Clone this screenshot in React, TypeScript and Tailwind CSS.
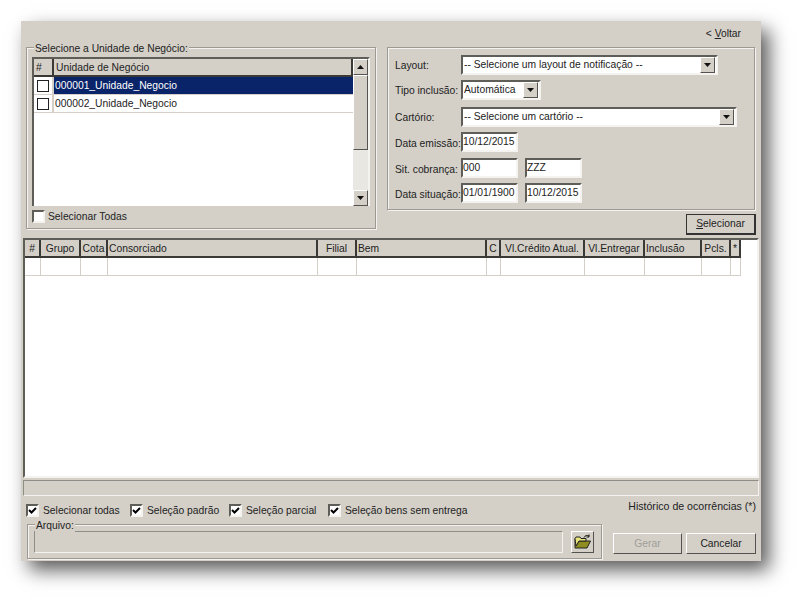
import React from "react";

const sunken = "border-2 border-t-[#5f5d58] border-l-[#5f5d58] border-r-[#f4f3ef] border-b-[#f4f3ef]";
const raised = "border border-t-white border-l-white border-r-[#55534f] border-b-[#55534f]";
const etched = "border border-[#9c9a93] shadow-[1px_1px_0_#f4f3ef,inset_1px_1px_0_#f4f3ef]";

const gridCols = [
  { label: "#", w: "w-[16px]", align: "text-center" },
  { label: "Grupo", w: "w-[40px]", align: "text-center" },
  { label: "Cota", w: "w-[27px]", align: "text-center" },
  { label: "Consorciado", w: "w-[210px]", align: "text-left" },
  { label: "Filial", w: "w-[39px]", align: "text-center" },
  { label: "Bem", w: "w-[130px]", align: "text-left" },
  { label: "C", w: "w-[14px]", align: "text-center" },
  { label: "Vl.Crédito Atual.", w: "w-[84px]", align: "text-center" },
  { label: "Vl.Entregar", w: "w-[60px]", align: "text-center" },
  { label: "Inclusão", w: "w-[57px]", align: "text-left" },
  { label: "Pcls.", w: "w-[29px]", align: "text-center" },
  { label: "*", w: "w-[10px]", align: "text-center" },
];

const Arrow = ({ up = false }: { up?: boolean }) => (
  <svg width="7" height="4" viewBox="0 0 7 4" className={up ? "rotate-180" : ""}>
    <path d="M0 0h7L3.5 4z" fill="#111" />
  </svg>
);

const ScrollBtn = ({ up = false }: { up?: boolean }) => (
  <div className={`flex h-[16px] w-[15px] shrink-0 items-center justify-center bg-[#d4d0c8] ${raised}`}>
    <Arrow up={up} />
  </div>
);

const Combo = ({ text, w }: { text: string; w: string }) => (
  <div className={`flex h-[20px] items-center bg-white pl-[1px] pr-[1px] ${w} ${sunken}`}>
    <span className="flex-1 truncate pt-[1px]">{text}</span>
    <ScrollBtn />
  </div>
);

const Field = ({ text }: { text: string }) => (
  <div className={`flex h-[20px] w-[57px] items-center bg-white ${sunken}`}>{text}</div>
);

const FormRow = ({ label, children, mt, low }: { label: string; children: React.ReactNode; mt: string; low?: boolean }) => (
  <div className={`flex items-center ${mt}`}>
    <span className={`w-[66px] shrink-0 whitespace-nowrap ${low ? "pt-[4px]" : "pt-[2px]"}`}>{label}</span>
    {children}
  </div>
);

const Check = ({ label, w }: { label: string; w: string }) => (
  <div className={`flex items-center ${w}`}>
    <div className={`flex h-[13px] w-[13px] shrink-0 items-center justify-center bg-white ${sunken}`}>
      <svg width="9" height="9" viewBox="0 0 9 9">
        <path d="M1 4l2.5 2.5L8 2" fill="none" stroke="#000" strokeWidth="2" />
      </svg>
    </div>
    <span className="ml-[4px] whitespace-nowrap pt-[2px]">{label}</span>
  </div>
);

const UnitRow = ({ text, selected }: { text: string; selected?: boolean }) => (
  <div className="flex h-[18px] border-b border-[#d4d0c8]">
    <div className="flex w-[20px] items-center justify-center border-r-2 border-[#d4d0c8] bg-white">
      <div className="h-[12px] w-[12px] border border-[#222] bg-white" />
    </div>
    <div className={`flex flex-1 items-center pl-[1px] pt-[2px] ${selected ? "bg-[#0a246a] text-white" : "bg-white"}`}>{text}</div>
  </div>
);

const GroupLabel = ({ text, left }: { text: string; left: string }) => (
  <span className={`absolute top-[-6px] bg-[#d4d0c8] px-[1px] leading-[13px] ${left}`}>{text}</span>
);

const FolderIcon = () => (
  <svg width="18" height="16" viewBox="0 0 18 16">
    <path d="M1 4.5V14h12l3.5-7H5L2 12" fill="#8f8c22" stroke="#222" strokeWidth="1" />
    <path d="M1 4.5 2 3h4l1 1.5h5V7H5l-3 5z" fill="#e8e47c" stroke="#222" strokeWidth="1" />
    <path d="M10 3.5C11 1.5 13 1 15 2M15 .5V3h-2.5" fill="none" stroke="#111" strokeWidth="1" />
  </svg>
);

export default function App() {
  return (
    <div className="min-h-screen bg-white pl-[21px] pt-[21px] font-['Liberation_Sans',Arial,sans-serif] text-[10.3px] leading-none text-[#222]">
      <div className="flex h-[540px] w-[740px] flex-col bg-[#d4d0c8] shadow-[8px_9px_18px_rgba(0,0,0,0.65)]">
        {/* topo */}
        <div className="flex h-[26px] shrink-0 items-center justify-end pr-[20px] pt-[1px]">
          <span>
            &lt; <span className="underline">V</span>oltar
          </span>
        </div>

        {/* filtros */}
        <div className="flex h-[191px] shrink-0 pl-[5px]">
          <div className={`relative h-[182px] w-[350px] shrink-0 px-[5px] pt-[9px] ${etched}`}>
            <GroupLabel text="Selecione a Unidade de Negócio:" left="left-[7px]" />
            <div className={`flex h-[149px] bg-white ${sunken} border-b-0`}>
              <div className="flex-1">
                <div className="flex h-[18px] border-b-2 border-[#3a3936] bg-[#d4d0c8]">
                  <div className="flex w-[20px] items-center border-r-2 border-[#3a3936] pl-[2px] pt-[2px]">#</div>
                  <div className="flex flex-1 items-center border-r-2 border-[#3a3936] pl-[2px] pt-[2px]">Unidade de Negócio</div>
                </div>
                <UnitRow text="000001_Unidade_Negocio" selected />
                <UnitRow text="000002_Unidade_Negocio" />
              </div>
              <div className="flex w-[15px] shrink-0 flex-col bg-[#e9e7e1]">
                <ScrollBtn up />
                <div className={`h-[75px] bg-[#d4d0c8] ${raised}`} />
                <div className="flex-1" />
                <ScrollBtn />
              </div>
            </div>
            <div className="mt-[4px] flex items-center">
              <div className={`h-[13px] w-[13px] bg-white ${sunken}`} />
              <span className="ml-[3px] pt-[2px]">Selecionar Todas</span>
            </div>
          </div>

          <div className="ml-[11px] w-[369px] shrink-0">
            <div className={`h-[163px] w-[368px] pl-[7px] pt-[7px] ${etched}`}>
              <FormRow label="Layout:" mt="mt-0">
                <Combo text="-- Selecione um layout de notificação --" w="w-[257px]" />
              </FormRow>
              <FormRow label="Tipo inclusão:" mt="mt-[5px]">
                <Combo text="Automática" w="w-[80px]" />
              </FormRow>
              <FormRow label="Cartório:" mt="mt-[7px]">
                <Combo text="-- Selecione um cartório --" w="w-[276px]" />
              </FormRow>
              <FormRow label="Data emissão:" mt="mt-[5px]" low>
                <Field text="10/12/2015" />
              </FormRow>
              <FormRow label="Sit. cobrança:" mt="mt-[6px]" low>
                <div className="flex gap-[7px]">
                  <Field text="000" />
                  <Field text="ZZZ" />
                </div>
              </FormRow>
              <FormRow label="Data situação:" mt="mt-[5px]" low>
                <div className="flex gap-[7px]">
                  <Field text="01/01/1900" />
                  <Field text="10/12/2015" />
                </div>
              </FormRow>
            </div>
            <div className="mt-[4px] flex justify-end">
              <div className="flex h-[21px] w-[70px] items-center justify-center border border-b-2 border-r-2 border-[#333] bg-[#d4d0c8] pt-[1px]">
                <span>
                  <span className="underline">S</span>elecionar
                </span>
              </div>
            </div>
          </div>
        </div>

        {/* grade */}
        <div className={`mx-[2px] h-[240px] shrink-0 bg-white ${sunken}`}>
          <div className="flex h-[18px] w-fit border-b-2 border-[#3a3936] bg-[#d4d0c8]">
            {gridCols.map((c) => (
              <div key={c.label} className={`flex items-center justify-center whitespace-nowrap border-r-2 border-[#3a3936] pt-[2px] ${c.w} ${c.align}`}>
                <span className={c.align === "text-left" ? "w-full pl-[1px]" : ""}>{c.label}</span>
              </div>
            ))}
          </div>
          <div className="flex h-[18px] w-fit border-b border-[#d4d0c8]">
            {gridCols.map((c) => (
              <div key={c.label} className={`border-r border-[#d4d0c8] ${c.w}`} />
            ))}
          </div>
        </div>
        <div className="mx-[2px] mt-[2px] h-[16px] shrink-0 border border-t-[#8f8d87] border-l-[#8f8d87] border-r-[#f4f3ef] border-b-[#f4f3ef]" />

        {/* rodape */}
        <div className="flex flex-1 items-start justify-between pl-[5px] pr-[5px]">
          <div className="flex w-[576px] flex-col">
            <div className="mt-[7px] flex h-[15px] items-center">
              <Check label="Selecionar todas" w="w-[104px]" />
              <Check label="Seleção padrão" w="w-[99px]" />
              <Check label="Seleção parcial" w="w-[99px]" />
              <Check label="Seleção bens sem entrega" w="w-[150px]" />
            </div>
            <div className={`relative ml-[1px] mt-[6px] flex h-[35px] w-[575px] items-center gap-[8px] pl-[6px] ${etched}`}>
              <GroupLabel text="Arquivo:" left="left-[7px]" />
              <div className="mt-[1px] h-[22px] w-[529px] border border-t-[#8f8d87] border-l-[#8f8d87] border-r-[#f4f3ef] border-b-[#f4f3ef] bg-[#d4d0c8]" />
              <div className={`mt-[1px] flex h-[22px] w-[23px] items-center justify-center bg-[#d4d0c8] ${raised}`}>
                <FolderIcon />
              </div>
            </div>
          </div>
          <div className="flex flex-col items-end">
            <span className="mt-[5px] h-[27px] whitespace-nowrap text-[10.6px]">Histórico de ocorrências (*)</span>
            <div className="mt-[5px] flex gap-[4px]">
              <div className={`flex h-[21px] w-[69px] items-center justify-center bg-[#d4d0c8] pt-[1px] text-[#a09e98] ${raised}`}>Gerar</div>
              <div className={`flex h-[21px] w-[70px] items-center justify-center bg-[#d4d0c8] pt-[1px] ${raised}`}>Cancelar</div>
            </div>
          </div>
        </div>
      </div>
    </div>
  );
}
